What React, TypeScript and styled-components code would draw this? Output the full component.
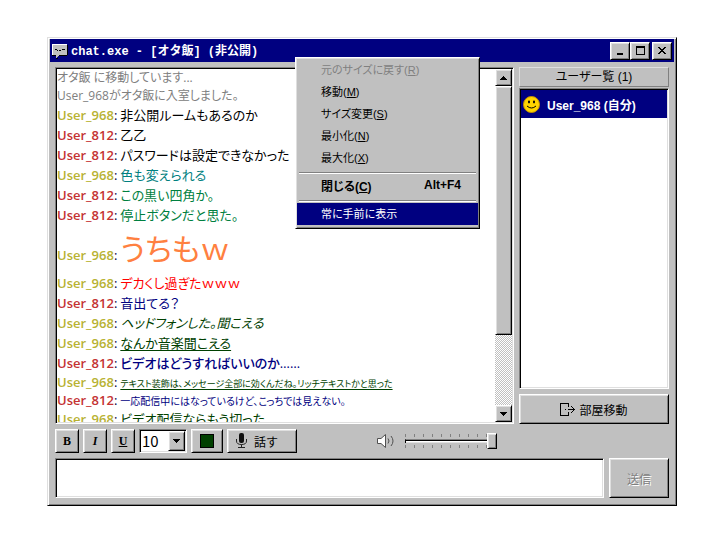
import React, { useState } from "react";
import styled, { createGlobalStyle, css } from "styled-components";

const GlobalStyle = createGlobalStyle`
  * { box-sizing: border-box; }
  body { margin: 0; background: #fff; }
  button, input, select, textarea { font: inherit; color: inherit; border-radius: 0; margin: 0; }
`;

const ui = `12px "Liberation Sans", "Noto Sans CJK JP", sans-serif`;

const raised = css`
  border: 1px solid;
  border-color: #fff #000 #000 #fff;
  box-shadow: inset 1px 1px #dfdfdf, inset -1px -1px #808080;
  background: #c0c0c0;
`;
const sunken = css`
  border: 1px solid;
  border-color: #808080 #fff #fff #808080;
  box-shadow: inset 1px 1px #000, inset -1px -1px #dfdfdf;
  background: #fff;
`;

const Desktop = styled.main`
  padding: 37px 43px 34px 47px;
  font: ${ui};
  color: #000;
`;
const Window = styled.section`
  position: relative;
  border: 1px solid;
  border-color: #dfdfdf #000 #000 #dfdfdf;
  box-shadow: inset 1px 1px #fff, inset -1px -1px #808080;
  background: #c0c0c0;
  padding: 1px 2px 7px 2px;
`;
const TitleBar = styled.header`
  display: flex;
  align-items: center;
  height: 23px;
  padding: 0 2px 0 2px;
  background: #000080;
  color: #fff;
`;
const Title = styled.h1`
  flex: 1;
  margin: 0 0 0 3px;
  padding-bottom: 2px;
  font: bold 12px "Liberation Mono", "Noto Sans CJK JP", monospace;
  white-space: pre;
`;
const CaptionButton = styled.button<{ $gap?: boolean }>`
  ${raised}
  width: 20px;
  height: 18px;
  padding: 0;
  margin-left: ${(p) => (p.$gap ? 2 : 0)}px;
  color: #000;
  display: grid;
  place-items: center;
`;
const Body = styled.div`
  display: grid;
  grid-template-columns: minmax(0, 1fr) 150px;
  gap: 5px;
  padding: 5px 5px 0;
`;
const ChatPane = styled.div`
  ${sunken}
  display: flex;
  height: 357px;
  padding: 1px;
`;
const Log = styled.div`
  flex: 1;
  min-width: 0;
  overflow: hidden;
  font: 12px "Open Sans", "Noto Sans CJK JP", sans-serif;
  font-feature-settings: "palt";
`;
const Line = styled.p<{ $h: number }>`
  margin: 0;
  height: ${(p) => p.$h}px;
  line-height: ${(p) => p.$h}px;
  white-space: nowrap;
  color: #808080;
`;
const Name = styled.span<{ $c: string }>`
  color: ${(p) => p.$c};
  font-size: 13px;
  font-weight: 600;
`;
const Colon = styled.span`
  color: #000040;
  font-size: 13px;
  margin-right: 3px;
`;
const Text = styled.span<{ $c: string; $size: number; $b?: boolean; $i?: boolean; $u?: boolean }>`
  color: ${(p) => p.$c};
  font-size: ${(p) => p.$size}px;
  font-weight: ${(p) => (p.$b ? 500 : 400)};
  font-style: ${(p) => (p.$i ? "italic" : "normal")};
  text-decoration: ${(p) => (p.$u ? "underline" : "none")};
  text-underline-offset: 2px;
`;
const ScrollBar = styled.div`
  display: flex;
  flex-direction: column;
  width: 17px;
  background: repeating-conic-gradient(#c0c0c0 0 25%, #fff 0 50%) 0 0 / 2px 2px;
`;
const ScrollButton = styled.button`
  ${raised}
  height: 17px;
  padding: 0;
  display: grid;
  place-items: center;
`;
const ScrollThumb = styled.div`
  ${raised}
  height: 249px;
`;
const Spacer = styled.div`
  flex: 1;
`;
const Side = styled.aside`
  display: flex;
  flex-direction: column;
`;
const SideHeader = styled.h2`
  margin: 0 0 1px;
  height: 20px;
  border: 1px solid;
  border-color: #dfdfdf #808080 #808080 #dfdfdf;
  font: ${ui};
  font-feature-settings: "palt";
  line-height: 18px;
  text-align: center;
`;
const UserList = styled.ul`
  ${sunken}
  flex: 1;
  margin: 0 0 5px;
  padding: 1px;
  list-style: none;
`;
const User = styled.li`
  display: flex;
  align-items: center;
  gap: 7px;
  height: 28px;
  padding: 0 2px;
  background: #000080;
  color: #fff;
  font-weight: bold;
`;
const Button = styled.button<{ $w?: number; $h?: number }>`
  ${raised}
  display: flex;
  align-items: center;
  justify-content: center;
  gap: 4px;
  padding: 0;
  width: ${(p) => (p.$w ? p.$w + "px" : "auto")};
  height: ${(p) => p.$h ?? 24}px;
  &:disabled { color: #808080; text-shadow: 1px 1px #fff; }
`;
const TalkButton = styled(Button)`
  justify-content: flex-start;
  gap: 6px;
  padding: 0 0 0 7px;
`;
const FormatButton = styled(Button)<{ $kind: "b" | "i" | "u" }>`
  width: 24px;
  font: bold 12px "Liberation Serif", serif;
  font-style: ${(p) => (p.$kind === "i" ? "italic" : "normal")};
  text-decoration: ${(p) => (p.$kind === "u" ? "underline" : "none")};
`;
const Toolbar = styled.div`
  display: flex;
  align-items: center;
  gap: 4px;
  padding: 5px 5px 0;
`;
const SizeBox = styled.div`
  ${sunken}
  display: grid;
  grid-template-columns: 1fr 17px;
  width: 48px;
  height: 24px;
  padding: 1px;
`;
const SizeSelect = styled.select`
  grid-area: 1 / 1 / 2 / 3;
  appearance: none;
  border: 0;
  outline: 0;
  padding: 0 0 0 1px;
  background: transparent;
  font: 15px "Noto Sans CJK JP", sans-serif;
  line-height: 20px;
`;
const SizeArrow = styled.span`
  ${raised}
  grid-area: 1 / 2;
  display: grid;
  place-items: center;
  pointer-events: none;
`;
const Swatch = styled.span`
  width: 14px;
  height: 14px;
  border: 1px solid #000;
  background: #004000;
`;
const Volume = styled.label`
  display: flex;
  align-items: center;
  gap: 10px;
  margin-left: 76px;
`;
const SliderBox = styled.span`
  display: grid;
  width: 92px;
  height: 16px;
  align-items: center;
`;
const Ticks = styled.span`
  grid-area: 1 / 1;
  height: 14px;
  margin-right: 10px;
  background:
    linear-gradient(#c0c0c0, #c0c0c0) 0 3px / 100% 8px no-repeat,
    repeating-linear-gradient(90deg, #808080 0 1px, transparent 1px 9px);
`;
const Slider = styled.input`
  grid-area: 1 / 1;
  appearance: none;
  width: 100%;
  height: 16px;
  background: transparent;
  outline: 0;
  &::-webkit-slider-runnable-track {
    height: 4px;
    background: #fff;
    border-top: 1px solid #808080;
    border-left: 1px solid #000;
    box-shadow: inset 0 1px #000, inset 0 -1px #dfdfdf;
  }
  &::-webkit-slider-thumb {
    appearance: none;
    ${raised}
    width: 10px;
    height: 16px;
    margin-top: -7px;
  }
`;
const Compose = styled.form`
  display: grid;
  grid-template-columns: 1fr 60px;
  gap: 5px;
  padding: 5px 5px 0;
`;
const Message = styled.textarea`
  ${sunken}
  display: block;
  width: 100%;
  height: 40px;
  resize: none;
  outline: 0;
`;
const Menu = styled.div`
  ${raised}
  position: absolute;
  top: 19px;
  left: 247px;
  width: 185px;
  padding: 1px 1px 3px;
`;
const MenuItem = styled.button<{ $on?: boolean; $b?: boolean }>`
  display: flex;
  justify-content: space-between;
  align-items: center;
  width: 100%;
  height: 22px;
  padding: 0 17px 2px 24px;
  border: 0;
  background: ${(p) => (p.$on ? "#000080" : "transparent")};
  color: ${(p) => (p.$on ? "#fff" : "#000")};
  font-size: ${(p) => (p.$b ? 12 : 11)}px;
  font-weight: ${(p) => (p.$b ? "bold" : "normal")};
  font-feature-settings: "palt";
  &:disabled { color: #808080; }
`;
const Separator = styled.hr`
  height: 2px;
  margin: 3px 2px 1px;
  border: 0;
  border-top: 1px solid #808080;
  border-bottom: 1px solid #fff;
`;

const Arrow = ({ up }: { up?: boolean }) => (
  <svg width="7" height="4" shapeRendering="crispEdges">
    <path d={up ? "M3 0h1v1h1v1h1v1h1v1H0V3h1V2h1V1h1z" : "M0 0h7v1H6v1H5v1H4v1H3V3H2V2H1V1H0z"} />
  </svg>
);
const ChatIcon = () => (
  <svg width="16" height="16" shapeRendering="crispEdges">
    <path fill="#c0c0c0" d="M0 1h15v11H7v1H6v1H5v1H4v-3H0z" />
    <path fill="#fff" d="M0 1h15v1H0zM0 2h1v10H0z" />
    <path fill="#000" d="M3 6h2v1H3zM5 7h1v1H5zM7 7h2v1H7zM10 6h3v1h-3zM0 12h4v1H0zM7 12h8v1H7zM15 2h1v10h-1zM4 15h2v1H4z" />
  </svg>
);
const Smiley = () => (
  <svg width="17" height="17" viewBox="0 0 17 17">
    <circle cx="8.5" cy="8.5" r="8" fill="#ffd500" stroke="#c79200" />
    <ellipse cx="6" cy="6" rx="1" ry="1.4" />
    <ellipse cx="11" cy="6" rx="1" ry="1.4" />
    <path d="M4 10q4.500 4 9 0" fill="none" stroke="#000" />
  </svg>
);
const DoorIcon = () => (
  <svg width="15" height="13" shapeRendering="crispEdges">
    <path d="M0 0h9v4H8V1H1v11h7V9h1v4H0zM5 6h1v1H5zM8 6h6v1H8zM11 3h1v1h-1zM12 4h1v1h-1zM13 5h1v1h-1zM14 6h1v1h-1zM13 7h1v1h-1zM12 8h1v1h-1zM11 9h1v1h-1z" />
  </svg>
);
const MicIcon = () => (
  <svg width="13" height="16" viewBox="0 0 13 16">
    <rect x="4" y="0" width="5" height="10" rx="2" fill="#111" />
    <path d="M1.500 6v2q0 3.500 5 3.500t5-3.500V6M6.500 11.500v3M3 14.500h7" fill="none" stroke="#222" />
  </svg>
);
const SpeakerIcon = () => (
  <svg width="18" height="16" viewBox="0 0 18 16" fill="none" stroke="#505050">
    <path d="M.5 5.500h3.500l4.500-4v13l-4.500-4H.5z" fill="#fff" />
    <path d="M11 5.500q2 2.500 0 5M14 3q4 5 0 10" />
  </svg>
);

type Msg = { n?: string; t: string; c?: string; s?: number; h?: number; b?: boolean; i?: boolean; u?: boolean };
const messages: Msg[] = [
  { t: "オタ飯 に移動しています..." , h: 18 },
  { t: "User_968がオタ飯に入室しました。", h: 18 },
  { n: "968", t: "非公開ルームもあるのか", c: "#000" },
  { n: "812", t: "乙乙", c: "#000" },
  { n: "812", t: "パスワードは設定できなかった", c: "#000" },
  { n: "968", t: "色も変えられる", c: "#008080" },
  { n: "812", t: "この黒い四角か。", c: "#008040" },
  { n: "812", t: "停止ボタンだと思た。", c: "#008040" },
  { n: "968", t: "うちもｗ", c: "#ff8040", s: 30, h: 48 },
  { n: "968", t: "デカくし過ぎたｗｗｗ", c: "#ff0000" },
  { n: "812", t: "音出てる？", c: "#000080" },
  { n: "968", t: "ヘッドフォンした。聞こえる", c: "#004000", i: true },
  { n: "968", t: "なんか音楽聞こえる", c: "#004000", u: true },
  { n: "812", t: "ビデオはどうすればいいのか……", c: "#000080", b: true },
  { n: "968", t: "テキスト装飾は、メッセージ全部に効くんだね。リッチテキストかと思った", c: "#004000", s: 9, h: 18, u: true },
  { n: "812", t: "一応配信中にはなっているけど、こっちでは見えない。", c: "#000080", s: 10, h: 18 },
  { n: "968", t: "ビデオ配信ならもう切った", c: "#004000" },
];
const menu = [
  { t: "元のサイズに戻す", k: "R", off: true },
  { t: "移動", k: "M" },
  { t: "サイズ変更", k: "S" },
  { t: "最小化", k: "N" },
  { t: "最大化", k: "X" },
];

export default function App() {
  const [volume, setVolume] = useState(100);
  return (
    <Desktop>
      <GlobalStyle />
      <Window>
        <TitleBar>
          <ChatIcon />
          <Title>chat.exe - [オタ飯] (非公開)</Title>
          <CaptionButton aria-label="最小化">
            <svg width="8" height="8"><path d="M1 6h6v2H1z" /></svg>
          </CaptionButton>
          <CaptionButton aria-label="最大化">
            <svg width="9" height="9" shapeRendering="crispEdges"><path fillRule="evenodd" d="M0 0h9v9H0zM1 2h7v6H1z" /></svg>
          </CaptionButton>
          <CaptionButton $gap aria-label="閉じる">
            <svg width="8" height="7" shapeRendering="crispEdges"><path d="M0 0h2v1h1v1h2V1h1V0h2v1H7v1H6v1H5v1h1v1h1v1h1v1H6V6H5V5H3v1H2v1H0V6h1V5h1V4h1V3H2V2H1V1H0z" /></svg>
          </CaptionButton>
        </TitleBar>
        <Body>
          <ChatPane>
            <Log>
              {messages.map((m, i) => (
                <Line key={i} $h={m.h ?? 20}>
                  {m.n ? (
                    <>
                      <Name $c={m.n === "968" ? "#b8b233" : "#c43333"}>User_{m.n}</Name>
                      <Colon>:</Colon>
                      <Text $c={m.c ?? "#000"} $size={m.s ?? 13} $b={m.b} $i={m.i} $u={m.u}>{m.t}</Text>
                    </>
                  ) : m.t}
                </Line>
              ))}
            </Log>
            <ScrollBar>
              <ScrollButton aria-label="上へ"><Arrow up /></ScrollButton>
              <ScrollThumb />
              <Spacer />
              <ScrollButton aria-label="下へ"><Arrow /></ScrollButton>
            </ScrollBar>
          </ChatPane>
          <Side>
            <SideHeader>ユーザー覧 (1)</SideHeader>
            <UserList>
              <User><Smiley />User_968 (自分)</User>
            </UserList>
            <Button $h={30}><DoorIcon />部屋移動</Button>
          </Side>
        </Body>
        <Toolbar>
          <FormatButton $kind="b">B</FormatButton>
          <FormatButton $kind="i">I</FormatButton>
          <FormatButton $kind="u">U</FormatButton>
          <SizeBox>
            <SizeSelect aria-label="文字サイズ" defaultValue="10"><option>10</option><option>12</option></SizeSelect>
            <SizeArrow><Arrow /></SizeArrow>
          </SizeBox>
          <Button $w={32} aria-label="文字色"><Swatch /></Button>
          <TalkButton $w={70}><MicIcon />話す</TalkButton>
          <Volume>
            <SpeakerIcon />
            <SliderBox>
              <Ticks />
              <Slider type="range" aria-label="音量" value={volume} onChange={(e) => setVolume(Number(e.target.value))} />
            </SliderBox>
          </Volume>
        </Toolbar>
        <Compose onSubmit={(e) => e.preventDefault()}>
          <Message aria-label="メッセージ" />
          <Button $h={40} disabled>送信</Button>
        </Compose>
        <Menu role="menu">
          {menu.map((m) => (
            <MenuItem key={m.k} role="menuitem" disabled={m.off}><span>{m.t}(<u>{m.k}</u>)</span></MenuItem>
          ))}
          <Separator />
          <MenuItem role="menuitem" $b><span>閉じる(<u>C</u>)</span><span>Alt+F4</span></MenuItem>
          <Separator />
          <MenuItem role="menuitem" $on>常に手前に表示</MenuItem>
        </Menu>
      </Window>
    </Desktop>
  );
}
